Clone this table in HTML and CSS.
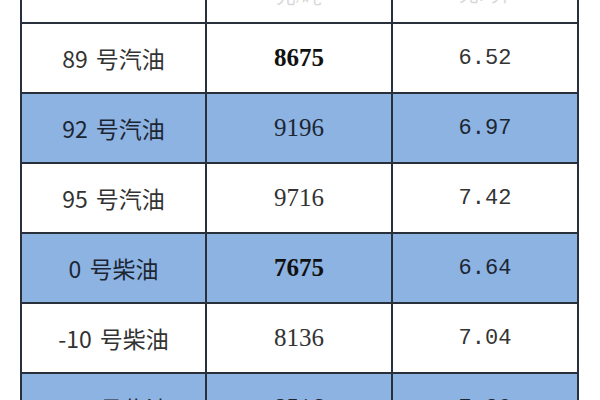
FILE: index.html
```html
<!DOCTYPE html>
<html lang="zh">
<head>
<meta charset="utf-8">
<title>油价表</title>
<link rel="stylesheet" href="styles.css">
</head>
<body>
<div class="frame">
<table class="fuel">
  <tr class="head">
    <td class="name">油品</td>
    <td class="ton">元/吨</td>
    <td class="litre">元/升</td>
  </tr>
  <tr>
    <td class="name">89 号汽油</td>
    <td class="ton bold">8675</td>
    <td class="litre">6.52</td>
  </tr>
  <tr class="blue">
    <td class="name">92 号汽油</td>
    <td class="ton">9196</td>
    <td class="litre">6.97</td>
  </tr>
  <tr>
    <td class="name">95 号汽油</td>
    <td class="ton">9716</td>
    <td class="litre">7.42</td>
  </tr>
  <tr class="blue">
    <td class="name">0 号柴油</td>
    <td class="ton bold">7675</td>
    <td class="litre">6.64</td>
  </tr>
  <tr>
    <td class="name">-10 号柴油</td>
    <td class="ton">8136</td>
    <td class="litre">7.04</td>
  </tr>
  <tr class="blue">
    <td class="name">-20 号柴油</td>
    <td class="ton">8516</td>
    <td class="litre">7.30</td>
  </tr>
</table>
</div>
</body>
</html>
```
FILE: styles.css
```css
html, body {
  margin: 0;
  padding: 0;
  background: #ffffff;
}
.frame {
  width: 600px;
  height: 400px;
  overflow: hidden;
}
.fuel {
  border-collapse: collapse;
  margin-left: 20px;
  margin-top: -48px;
  table-layout: fixed;
  width: 559px;
}
.fuel td {
  border: 2px solid #28303c;
  height: 68px;
  padding: 0;
  text-align: center;
  vertical-align: middle;
  color: #333333;
}
.fuel tr.blue td {
  background: #8db3e2;
  color: #1c2633;
}
.fuel td.name {
  width: 183px;
  font-family: "Noto Sans CJK SC", "Noto Sans", sans-serif;
  font-size: 23px;
  word-spacing: 3px;
}
.fuel td.ton {
  width: 184px;
  font-family: "Liberation Serif", serif;
  font-size: 25px;
}
.fuel td.ton.bold {
  font-weight: bold;
  color: #111111;
}
.fuel td.litre {
  font-family: "Liberation Mono", monospace;
  font-size: 22px;
}
.fuel tr.head td {
  vertical-align: bottom;
  color: #d8d8d8;
  font-size: 20px;
  line-height: 20px;
  height: 52px;
  padding-bottom: 16px;
}
.fuel tr.head td.name {
  padding-bottom: 24px;
  height: 44px;
}
```
